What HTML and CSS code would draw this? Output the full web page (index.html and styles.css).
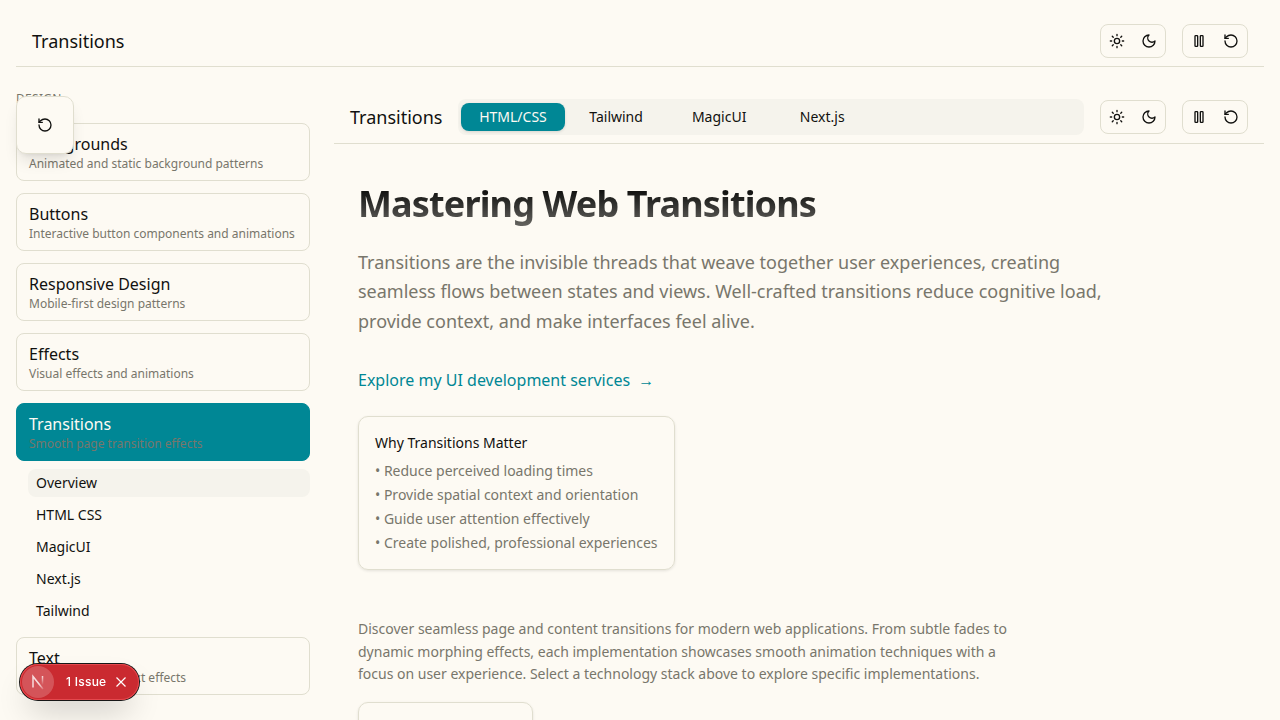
FILE: index.html
```
<!DOCTYPE html>
<html lang="en">
<head>
<meta charset="utf-8">
<title>Transitions</title>
<link rel="stylesheet" href="styles.css">
</head>
<body>
<svg class="defs" width="0" height="0" aria-hidden="true">
  <symbol id="sun" viewBox="0 0 24 24"><circle cx="12" cy="12" r="4"/><path d="M12 2v2M12 20v2M4.93 4.93l1.41 1.41M17.66 17.66l1.41 1.41M2 12h2M20 12h2M6.34 17.66l-1.41 1.41M19.07 4.93l-1.41 1.41"/></symbol>
  <symbol id="moon" viewBox="0 0 24 24"><path d="M12 3a6 6 0 0 0 9 9 9 9 0 1 1-9-9Z"/></symbol>
  <symbol id="pause" viewBox="0 0 24 24"><rect x="14" y="4" width="4" height="16" rx="1"/><rect x="6" y="4" width="4" height="16" rx="1"/></symbol>
  <symbol id="reset" viewBox="0 0 24 24"><path d="M3 12a9 9 0 1 0 9-9 9.75 9.75 0 0 0-6.74 2.74L3 8"/><path d="M3 3v5h5"/></symbol>
</svg>

<header class="topbar">
  <div class="title">Transitions</div>
  <div class="controls">
    <div class="group"><button><svg class="icon"><use href="#sun"/></svg></button><button><svg class="icon"><use href="#moon"/></svg></button></div>
    <div class="group"><button><svg class="icon"><use href="#pause"/></svg></button><button><svg class="icon"><use href="#reset"/></svg></button></div>
  </div>
</header>

<div class="layout">
  <aside class="sidebar">
    <div class="section-label">Design</div>
    <nav class="nav">
      <a class="card"><span class="name">Backgrounds</span><span class="desc">Animated and static background patterns</span></a>
      <a class="card"><span class="name">Buttons</span><span class="desc">Interactive button components and animations</span></a>
      <a class="card"><span class="name">Responsive Design</span><span class="desc">Mobile-first design patterns</span></a>
      <a class="card"><span class="name">Effects</span><span class="desc">Visual effects and animations</span></a>
      <div class="nav-group">
        <a class="card active"><span class="name">Transitions</span><span class="desc">Smooth page transition effects</span></a>
        <div class="subnav">
          <a class="sub current">Overview</a>
          <a class="sub">HTML CSS</a>
          <a class="sub">MagicUI</a>
          <a class="sub">Next.js</a>
          <a class="sub">Tailwind</a>
        </div>
      </div>
      <a class="card"><span class="name">Text</span><span class="desc">Typography and text effects</span></a>
    </nav>
  </aside>

  <main class="main">
    <div class="toolbar">
      <div class="title">Transitions</div>
      <div class="tabs">
        <a class="tab selected">HTML/CSS</a>
        <a class="tab">Tailwind</a>
        <a class="tab">MagicUI</a>
        <a class="tab">Next.js</a>
      </div>
      <div class="controls">
        <div class="group"><button><svg class="icon"><use href="#sun"/></svg></button><button><svg class="icon"><use href="#moon"/></svg></button></div>
        <div class="group"><button><svg class="icon"><use href="#pause"/></svg></button><button><svg class="icon"><use href="#reset"/></svg></button></div>
      </div>
    </div>
    <div class="content">
      <h1>Mastering Web Transitions</h1>
      <p class="lead">Transitions are the invisible threads that weave together user experiences, creating seamless flows between states and views. Well-crafted transitions reduce cognitive load, provide context, and make interfaces feel alive.</p>
      <a class="link">Explore my UI development services <span class="arrow">→</span></a>
      <section class="why">
        <h2>Why Transitions Matter</h2>
        <ul>
          <li>• Reduce perceived loading times</li>
          <li>• Provide spatial context and orientation</li>
          <li>• Guide user attention effectively</li>
          <li>• Create polished, professional experiences</li>
        </ul>
      </section>
      <p class="intro">Discover seamless page and content transitions for modern web applications. From subtle fades to dynamic morphing effects, each implementation showcases smooth animation techniques with a focus on user experience. Select a technology stack above to explore specific implementations.</p>
      <div class="next-card"></div>
    </div>
  </main>
</div>

<button class="floating"><svg class="icon"><use href="#reset"/></svg></button>

<div class="issues">
  <span class="issues-logo"><svg width="16" height="18" viewBox="0 0 16 18" fill="none" stroke-width="1.5">
    <defs>
      <linearGradient id="diag" x1="2" y1="3" x2="14" y2="16" gradientUnits="userSpaceOnUse"><stop offset=".6" stop-color="#fff"/><stop offset="1" stop-color="#fff" stop-opacity=".15"/></linearGradient>
      <linearGradient id="stem" x1="12" y1="3" x2="12" y2="12" gradientUnits="userSpaceOnUse"><stop offset="0" stop-color="#fff"/><stop offset="1" stop-color="#fff" stop-opacity="0"/></linearGradient>
    </defs>
    <path d="M3 14.5V3.5L13 16" stroke="url(#diag)"/><path d="M12.5 3v9" stroke="url(#stem)"/>
  </svg></span>
  <span class="issues-text">1 Issue</span>
  <svg class="issues-close" width="10" height="10" viewBox="0 0 10 10"><path d="M.5.5l9 9M9.5.5l-9 9"/></svg>
</div>
</body>
</html>
```
FILE: styles.css
```
* { box-sizing: border-box; margin: 0; padding: 0; }
html, body { height: 720px; overflow: hidden; }
body {
  --bg: #fdfaf3;
  --fg: #11110f;
  --muted: #78766b;
  --line: #e0decf;
  --soft: #f5f3ec;
  --teal: #008795;
  padding: 16px;
  background: var(--bg);
  color: var(--fg);
  font: 16px/24px "Noto Sans", sans-serif;
}
.defs { position: absolute; }
button { font: inherit; color: inherit; background: none; border: 0; }
.icon { width: 16px; height: 16px; fill: none; stroke: currentColor; stroke-width: 2; stroke-linecap: round; stroke-linejoin: round; }

.topbar { display: flex; align-items: center; justify-content: space-between; height: 51px; padding: 0 16px; border-bottom: 1px solid var(--line); }
.title { font-size: 18px; line-height: 28px; }
.controls { display: flex; gap: 16px; }
.group { display: flex; height: 34px; border: 1px solid var(--line); border-radius: 8px; }
.group button { display: flex; align-items: center; justify-content: center; width: 32px; height: 32px; }

.layout { display: flex; gap: 24px; padding-top: 24px; }
.sidebar { width: 294px; flex: none; }
.section-label { margin-bottom: 16px; color: var(--muted); font-size: 12px; line-height: 16px; letter-spacing: .3px; text-transform: uppercase; }
.nav { display: flex; flex-direction: column; gap: 12px; }
.card { display: flex; flex-direction: column; padding: 8px 12px; border: 1px solid var(--line); border-radius: 8px; }
.desc { color: var(--muted); font-size: 12px; line-height: 16px; white-space: nowrap; }
.card.active { background: var(--teal); border-color: var(--teal); color: var(--bg); }
.subnav { display: flex; flex-direction: column; gap: 4px; margin: 8px 0 0 12px; }
.sub { padding: 4px 8px; border-radius: 8px; font-size: 14px; line-height: 20px; }
.sub.current { background: var(--soft); }

.main { flex: 1; min-width: 0; }
.toolbar { display: flex; align-items: center; gap: 16px; height: 53px; padding: 0 16px; border-bottom: 1px solid var(--line); }
.tabs { flex: 1; display: grid; grid-template-columns: repeat(6, 1fr); padding: 4px 4px 4px 3px; border-radius: 8px; background: var(--soft); font-size: 14px; line-height: 20px; }
.tab { padding: 4px 0; border-radius: 8px; text-align: center; }
.tab.selected { background: var(--teal); color: var(--bg); box-shadow: 0 1px 3px rgba(0,0,0,.12); }

.content { padding: 40px 24px 0; }
h1 {
  width: max-content;
  margin-bottom: 20px;
  padding-bottom: 4px;
  font-size: 36px; line-height: 40px; font-weight: 700; letter-spacing: -.85px;
  color: transparent;
  background: linear-gradient(to bottom, #11110f 15%, rgba(17,17,15,.63));
  -webkit-background-clip: text; background-clip: text;
}
.lead { max-width: 768px; color: var(--muted); font-size: 18px; line-height: 29.25px; }
.link { display: flex; gap: 8px; margin: 32px 0 24px; color: var(--teal); }
.why { width: max-content; padding: 16px; border: 1px solid var(--line); border-radius: 10px; box-shadow: 0 1px 3px rgba(0,0,0,.1); font-size: 14px; line-height: 20px; }
.why h2 { margin-bottom: 8px; font-size: 14px; font-weight: 400; }
.why ul { display: grid; gap: 4px; list-style: none; color: var(--muted); }
.intro { max-width: 672px; margin: 48px 0 16px; color: var(--muted); font-size: 14px; line-height: 22.75px; }
.next-card { width: 175px; height: 120px; border: 1px solid var(--line); border-radius: 10px; box-shadow: 0 1px 3px rgba(0,0,0,.1); }

.floating {
  position: fixed; left: 16px; top: 96px; width: 58px; height: 58px;
  display: flex; align-items: center; justify-content: center;
  background: var(--bg); border: 1px solid var(--line); border-radius: 10px;
  box-shadow: 0 10px 15px -3px rgba(0,0,0,.1), 0 4px 6px -4px rgba(0,0,0,.1);
}
.issues {
  position: fixed; left: 20px; top: 664px; width: 119px; height: 36px;
  display: flex; align-items: center; padding-left: 2px;
  border-radius: 18px; background: #ca2a30; color: #fff;
  box-shadow: 0 0 0 1px #171717, inset 0 0 0 1px #e5484d, 0 16px 32px -8px rgba(0,0,0,.24);
}
.issues-logo { display: flex; align-items: center; justify-content: center; width: 32px; height: 32px; border-radius: 50%; background: rgba(255,255,255,.2); }
.issues-logo svg { opacity: .8; }
.issues-text { width: 42px; margin: 0 8px 0 12px; font: 500 12px/16px Inter, sans-serif; letter-spacing: .25px; white-space: nowrap; }
.issues-close { stroke: #fff; stroke-width: 1.2; fill: none; }
```
